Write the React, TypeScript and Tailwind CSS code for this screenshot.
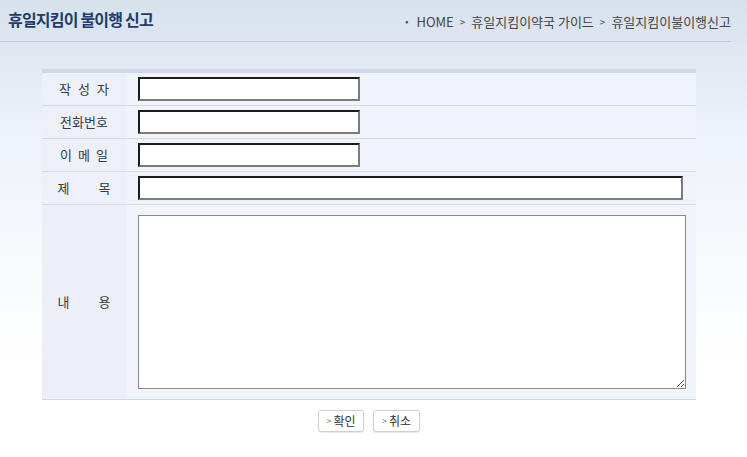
import React from "react";

const font = {
  fontFamily: '"Noto Sans CJK KR", "Noto Sans", "Liberation Sans", sans-serif',
};

const inputClass =
  "h-[24px] bg-white border-2 border-solid border-t-[#1c1c1c] border-l-[#1c1c1c] border-r-[#7b7b7b] border-b-[#7b7b7b] outline-none px-1 text-[12px]";

// label characters laid out with a fixed gap, like the old spaced-out table headers
const Label = ({ chars, gap }: { chars: string[]; gap: string }) => (
  <div className={`flex items-center text-[13px] text-[#3a3a3a] ${gap}`}>
    {chars.map((c, i) => (
      <span key={i}>{c}</span>
    ))}
  </div>
);

const Row = ({ label, children }: { label: React.ReactNode; children: React.ReactNode }) => (
  <div className="flex h-[33px] border-b border-[#d3d9e6]">
    <div className="w-[84px] flex items-center justify-center bg-[#edf0f6]">{label}</div>
    <div className="flex-1 flex items-center pl-[12px] bg-[#f1f4fa]">{children}</div>
  </div>
);

export default function App() {
  return (
    <div
      style={font}
      className="w-[747px] h-[457px] overflow-hidden bg-linear-to-b from-[#d7e1ec] via-[#eef3fa] via-30% to-white to-80%"
    >
      {/* Header */}
      <div className="w-[731px] h-[42px] flex items-center justify-between border-b border-[#c3cadc] pl-[8px] pb-[3px]">
        <h2 className="text-[16px] font-bold tracking-[-0.8px] text-[#223b68]">
          휴일지킴이 불이행 신고
        </h2>
        <div className="flex items-center gap-[6px] text-[13px] text-[#444] pt-[5px]">
          <span className="text-[9px] text-[#2b4b7a] mr-[2px]">•</span>
          <span>HOME</span>
          <span className="text-[10px]">&gt;</span>
          <span>휴일지킴이약국 가이드</span>
          <span className="text-[10px]">&gt;</span>
          <span>휴일지킴이불이행신고</span>
        </div>
      </div>

      {/* Form table */}
      <div className="ml-[42px] mt-[27px] w-[654px]">
        <div className="h-[4px] bg-[#cfd7e5]" />
        <Row label={<Label chars={["작", "성", "자"]} gap="gap-[7px]" />}>
          <input type="text" className={`${inputClass} w-[222px]`} />
        </Row>
        <Row label={<Label chars={["전", "화", "번", "호"]} gap="gap-0" />}>
          <input type="text" className={`${inputClass} w-[222px]`} />
        </Row>
        <Row label={<Label chars={["이", "메", "일"]} gap="gap-[6px]" />}>
          <input type="text" className={`${inputClass} w-[222px]`} />
        </Row>
        <Row label={<Label chars={["제", "목"]} gap="gap-[29px]" />}>
          <input type="text" className={`${inputClass} w-[545px]`} />
        </Row>
        <div className="flex h-[195px] border-b border-[#c9d9ea]">
          <div className="w-[84px] flex items-center justify-center bg-[#ecf0f6]">
            <Label chars={["내", "용"]} gap="gap-[29px]" />
          </div>
          <div className="flex-1 flex items-center pl-[12px] bg-[#f1f4fa]">
            <textarea className="w-[548px] h-[174px] bg-white border border-[#8a8a8a] outline-none p-1 text-[12px]" />
          </div>
        </div>

        {/* Buttons */}
        <div className="flex justify-center gap-[9px] mt-[10px]">
          <button className="h-[22px] w-[46px] flex items-center justify-center gap-[2px] bg-white border border-[#cfcfcf] rounded-[3px] text-[12px] text-[#333] shadow-[0_1px_1px_rgba(0,0,0,0.08)]">
            <span className="text-[9px] text-[#6f8a52]">&gt;</span>확인
          </button>
          <button className="h-[22px] w-[47px] flex items-center justify-center gap-[2px] bg-white border border-[#cfcfcf] rounded-[3px] text-[12px] text-[#333] shadow-[0_1px_1px_rgba(0,0,0,0.08)]">
            <span className="text-[9px] text-[#6f8a52]">&gt;</span>취소
          </button>
        </div>
      </div>
    </div>
  );
}
